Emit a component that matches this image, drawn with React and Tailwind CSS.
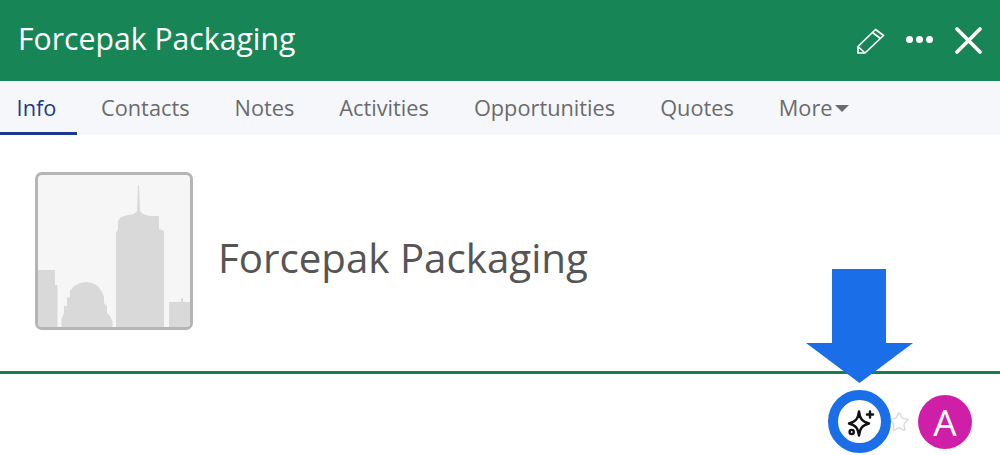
import { Star } from 'lucide-react'

const TABS = ['Contacts', 'Notes', 'Activities', 'Opportunities', 'Quotes']

function Skyline() {
  return (
    <svg viewBox="0 0 152 152" className="block w-full h-full" fill="#d9d9d9">
      <path d="M0 152V95H17V110H19.5V152Z" />
      <path d="M23.5 152V144L26 138V131L29 131V123L32 122V116L36 111L42 108L48 107L54 108L60 111L64 117L66 122V128L69 131V138L72 141L74.5 146V152Z" />
      <path d="M78 152V58L80 54V46L83 42L90 40L96 39L99 36L100 10H101L102 36L105 39L112 41L121 41V54L126 56V152Z" />
      <path d="M131 152V127H143V123H145V127H152V152Z" />
    </svg>
  )
}

function Sparkle() {
  return (
    <svg viewBox="0 0 32 32" className="w-[32px] h-[32px]" fill="none" stroke="#111" strokeWidth="2.4" strokeLinejoin="round" strokeLinecap="round">
      <path d="M15 5.5C16 13 18 15.5 25 17.5C18 19.5 16 22 15 29.5C14 22 12 19.5 5 17.5C12 15.5 14 13 15 5.5Z" />
      <path d="M26 5.5V11.5M23 8.5H29" />
      <circle cx="7.7" cy="26" r="2.1" />
    </svg>
  )
}

export default function App() {
  return (
    <div className="relative w-[1000px] h-[455px] overflow-hidden bg-white font-['Open_Sans','Noto_Sans',sans-serif]">
      {/* Header */}
      <div className="h-[81px] bg-[#178556] flex items-center justify-between pl-[18px] pr-[18px]">
        <h1 className="text-[30.2px] font-medium text-white leading-none -mt-[2px]">Forcepak Packaging</h1>
        <div className="flex items-center text-white">
          <svg viewBox="0 0 28 26" width="28" height="26" fill="none" stroke="currentColor" strokeWidth="1.7" strokeLinejoin="round">
            <path d="M1 25V18.5L18.5 1.5L26.5 7.5L8 25Z" />
            <path d="M15.5 4.5L23.5 10.5" />
            <path d="M1 18.5L8 25" />
          </svg>
          <div className="flex gap-[3px] ml-[21px] mr-[22px] -mt-[2px]">
            <span className="w-[7px] h-[7px] rounded-full bg-white" />
            <span className="w-[7px] h-[7px] rounded-full bg-white" />
            <span className="w-[7px] h-[7px] rounded-full bg-white" />
          </div>
          <svg viewBox="0 0 27 27" width="27" height="27" fill="none" stroke="currentColor" strokeWidth="3.6" strokeLinecap="round">
            <path d="M2 2L25 25M25 2L2 25" />
          </svg>
        </div>
      </div>

      {/* Tabs */}
      <div className="h-[54px] bg-[#f6f7fa] flex text-[21.75px] font-medium text-[#6b6b6b]">
        <div className="w-[77px] flex items-center justify-center border-b-[3px] border-[#1a3a8f] text-[#1a3a8f] pt-[3px] pr-[4px]">Info</div>
        <div className="flex items-center gap-[45px] pl-[24px]">
          {TABS.map(t => <span key={t}>{t}</span>)}
          <span className="flex items-center">
            More
            <span className="ml-[2px] mt-[1px] border-x-[7px] border-x-transparent border-t-[7px] border-t-[#6b6b6b]" />
          </span>
        </div>
      </div>

      {/* Company */}
      <div className="h-[236px] flex items-start pl-[35px] pt-[37px] gap-[25px]">
        <div className="w-[158px] h-[158px] rounded-[7px] border-[3px] border-[#b5b5b5] bg-[#f6f6f6] overflow-hidden">
          <Skyline />
        </div>
        <h2 className="text-[40.25px] font-medium text-[#555] leading-none mt-[66px]">Forcepak Packaging</h2>
      </div>
      <div className="h-[3px] bg-[#14804f]" />

      {/* Actions */}
      <div className="flex items-center justify-end pr-[28px] pt-[16px]">
        <div className="relative z-10 w-[63px] h-[63px] rounded-full border-[10px] border-[#1a6fe8] bg-white flex items-center justify-center shrink-0">
          <Sparkle />
        </div>
        <Star size={22} strokeWidth={1.6} className="text-[#dcdcdc] -ml-[3px] mr-[8px]" />
        <div className="w-[54px] h-[54px] rounded-full bg-[#cf1fa8] text-white text-[37px] flex items-center justify-center">A</div>
      </div>

      {/* Callout arrow */}
      <svg className="absolute left-[806px] top-[269px]" width="108" height="114" viewBox="0 0 108 114">
        <path d="M26 0H80V74H107L53.5 114L0 74H26Z" fill="#1a6fe8" />
      </svg>
    </div>
  )
}
